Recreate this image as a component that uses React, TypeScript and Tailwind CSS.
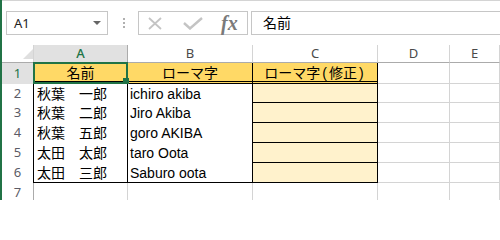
import React from "react";

type Row = { n: string; a?: string; b?: string };

const rows: Row[] = [
  { n: "1", a: "名前", b: "ローマ字" },
  { n: "2", a: "秋葉　一郎", b: "ichiro akiba" },
  { n: "3", a: "秋葉　二郎", b: "Jiro Akiba" },
  { n: "4", a: "秋葉　五郎", b: "goro AKIBA" },
  { n: "5", a: "太田　太郎", b: "taro Oota" },
  { n: "6", a: "太田　三郎", b: "Saburo oota" },
];

const FONT = { fontFamily: '"Liberation Sans", "Noto Sans CJK JP", sans-serif' };
const UI = { fontFamily: '"Noto Sans", "Liberation Sans", sans-serif' };

const grid = "bg-white border-r border-b border-[#d4d4d4]";

function HeaderRow() {
  return (
    <>
      <div className="relative bg-white border-r border-b border-r-[#d4d4d4] border-b-[#ababab]">
        <div className="absolute right-0 bottom-[3px] w-0 h-0 border-l-[10px] border-l-transparent border-b-[10px] border-b-[#dfdfdf]" />
      </div>
      <div
        className="flex items-center justify-center bg-[#e1e1e1] border-r border-b border-r-[#ababab] border-b-[#ababab] text-[13px] font-medium text-[#217346]"
        style={UI}
      >
        A
      </div>
      {["B", "C", "D", "E"].map((l) => (
        <div
          key={l}
          className="flex items-center justify-center bg-white border-r border-b border-r-[#d4d4d4] border-b-[#ababab] text-[13px] text-[#4a4a4a]"
          style={UI}
        >
          {l}
        </div>
      ))}
    </>
  );
}

function DataRow({ r, i }: { r: Row; i: number }) {
  const isHead = i === 0;
  const isLast = i === 5;

  const headCell =
    "relative flex items-end justify-center bg-[#ffd966] border-r border-r-black border-b-[3px] border-b-black border-double text-[14px] text-black";
  const aCls = isLast
    ? "flex items-center pl-[3px] bg-white border-r border-r-black border-b border-b-black text-[14px] text-black"
    : "flex items-center pl-[3px] bg-white border-r border-r-black text-[14px] text-black";
  const bCls = isLast
    ? "flex items-center pl-[2px] bg-white border-r border-r-black border-b border-b-black text-[14px] text-black"
    : "flex items-center pl-[2px] bg-white border-r border-r-black text-[14px] text-black";
  const cCls = "bg-[#fff2cc] border-r border-r-black border-b border-b-black";

  if (isHead) {
    return (
      <>
        <div
          className="flex items-center justify-center bg-[#e1e1e1] border-r border-r-[#ababab] text-[13px] text-[#217346]"
          style={UI}
        >
          {r.n}
        </div>
        <div className={headCell} style={FONT}>
          <span className="leading-[14px] mb-px">{r.a}</span>
          <div className="absolute -left-px -top-px -right-px -bottom-[3px] border-2 border-[#217346] z-10 pointer-events-none">
            <div className="absolute -right-[3px] -bottom-[2px] w-[6px] h-[6px] bg-[#217346]" />
          </div>
        </div>
        <div className={headCell} style={FONT}>
          <span className="leading-[14px] mb-px">{r.b}</span>
        </div>
        <div className={headCell} style={FONT}>
          <span className="leading-[14px] mb-px flex">
            ローマ字<span className="px-[2px]">(</span>修正<span className="px-[2px]">)</span>
          </span>
        </div>
        <div className={grid} />
        <div className={grid} />
      </>
    );
  }

  return (
    <>
      <div
        className="flex items-center justify-center bg-white border-r border-r-black text-[13px] text-[#5b5b66]"
        style={UI}
      >
        {r.n}
      </div>
      <div className={aCls} style={FONT}>
        <span className="leading-[18px] whitespace-pre">{r.a}</span>
      </div>
      <div className={bCls} style={FONT}>
        <span className="leading-[18px] whitespace-pre">{r.b}</span>
      </div>
      <div className={cCls} />
      <div className={grid} />
      <div className={grid} />
    </>
  );
}

export default function App() {
  return (
    <div className="w-[500px] h-[200px] overflow-hidden bg-white flex">
      <div className="w-[2px] shrink-0 bg-[#217346]" />
      <div className="w-[498px] flex flex-col overflow-hidden">
        {/* formula bar */}
        <div className="h-[45px] shrink-0 border-t border-[#d4d4d4] flex items-start pt-[10px] overflow-hidden">
          <div className="ml-[4px] shrink-0 w-[102px] h-[24px] border border-[#c6c6c6] flex items-center justify-between pl-[7px] pr-[6px]">
            <span className="text-[13px] text-[#222] leading-none" style={UI}>
              A1
            </span>
            <div className="w-0 h-0 border-l-[4px] border-r-[4px] border-t-[4px] border-l-transparent border-r-transparent border-t-[#666]" />
          </div>
          <div className="ml-[15px] shrink-0 h-[24px] flex flex-col gap-[2px] pt-[7px]">
            <div className="w-[2px] h-[2px] bg-[#b0b0b0]" />
            <div className="w-[2px] h-[2px] bg-[#b0b0b0]" />
            <div className="w-[2px] h-[2px] bg-[#b0b0b0]" />
          </div>
          <div className="ml-[13px] shrink-0 w-[110px] h-[24px] border border-[#c6c6c6] flex items-center pl-[9px]">
            <svg width="14" height="13" viewBox="0 0 14 13" className="mt-[1px]">
              <path d="M1 1 L13 12 M13 1 L1 12" stroke="#c4c4c4" strokeWidth="1.8" fill="none" />
            </svg>
            <svg width="20" height="13" viewBox="0 0 20 13" className="ml-[21px] mt-[1px]">
              <path d="M1 6 L7 11.5 L19 1" stroke="#c4c4c4" strokeWidth="2.4" fill="none" />
            </svg>
            <span
              className="ml-[18px] text-[20px] italic font-bold text-[#7a7a7a] leading-none -mt-[1px]"
              style={{ fontFamily: '"Liberation Serif", "DejaVu Serif", serif' }}
            >
              fx
            </span>
          </div>
          <div className="ml-[3px] flex-1 min-w-0 h-[24px] border border-r-0 border-[#c6c6c6] flex items-center pl-[11px]">
            <span className="text-[14px] text-black leading-none" style={FONT}>
              名前
            </span>
          </div>
        </div>
        {/* sheet grid */}
        <div className="grid shrink-0 grid-cols-[32px_94px_125px_125px_72px_50px] grid-rows-[18px_21px_19px_20px_20px_20px_20px]">
          <HeaderRow />
          {rows.map((r, i) => (
            <DataRow key={r.n} r={r} i={i} />
          ))}
        </div>
        <div className="h-[17px] shrink-0 grid grid-cols-[32px_94px_125px_125px_72px_50px]">
          <div
            className="flex items-start justify-center pt-[2px] bg-white border-r border-r-[#ababab] text-[13px] leading-[15px] text-[#5b5b66]"
            style={UI}
          >
            7
          </div>
          <div className="bg-white border-r border-[#d4d4d4]" />
          <div className="bg-white border-r border-[#d4d4d4]" />
          <div className="bg-white border-r border-[#d4d4d4]" />
          <div className="bg-white border-r border-[#d4d4d4]" />
          <div className="bg-white border-r border-[#d4d4d4]" />
        </div>
      </div>
    </div>
  );
}
